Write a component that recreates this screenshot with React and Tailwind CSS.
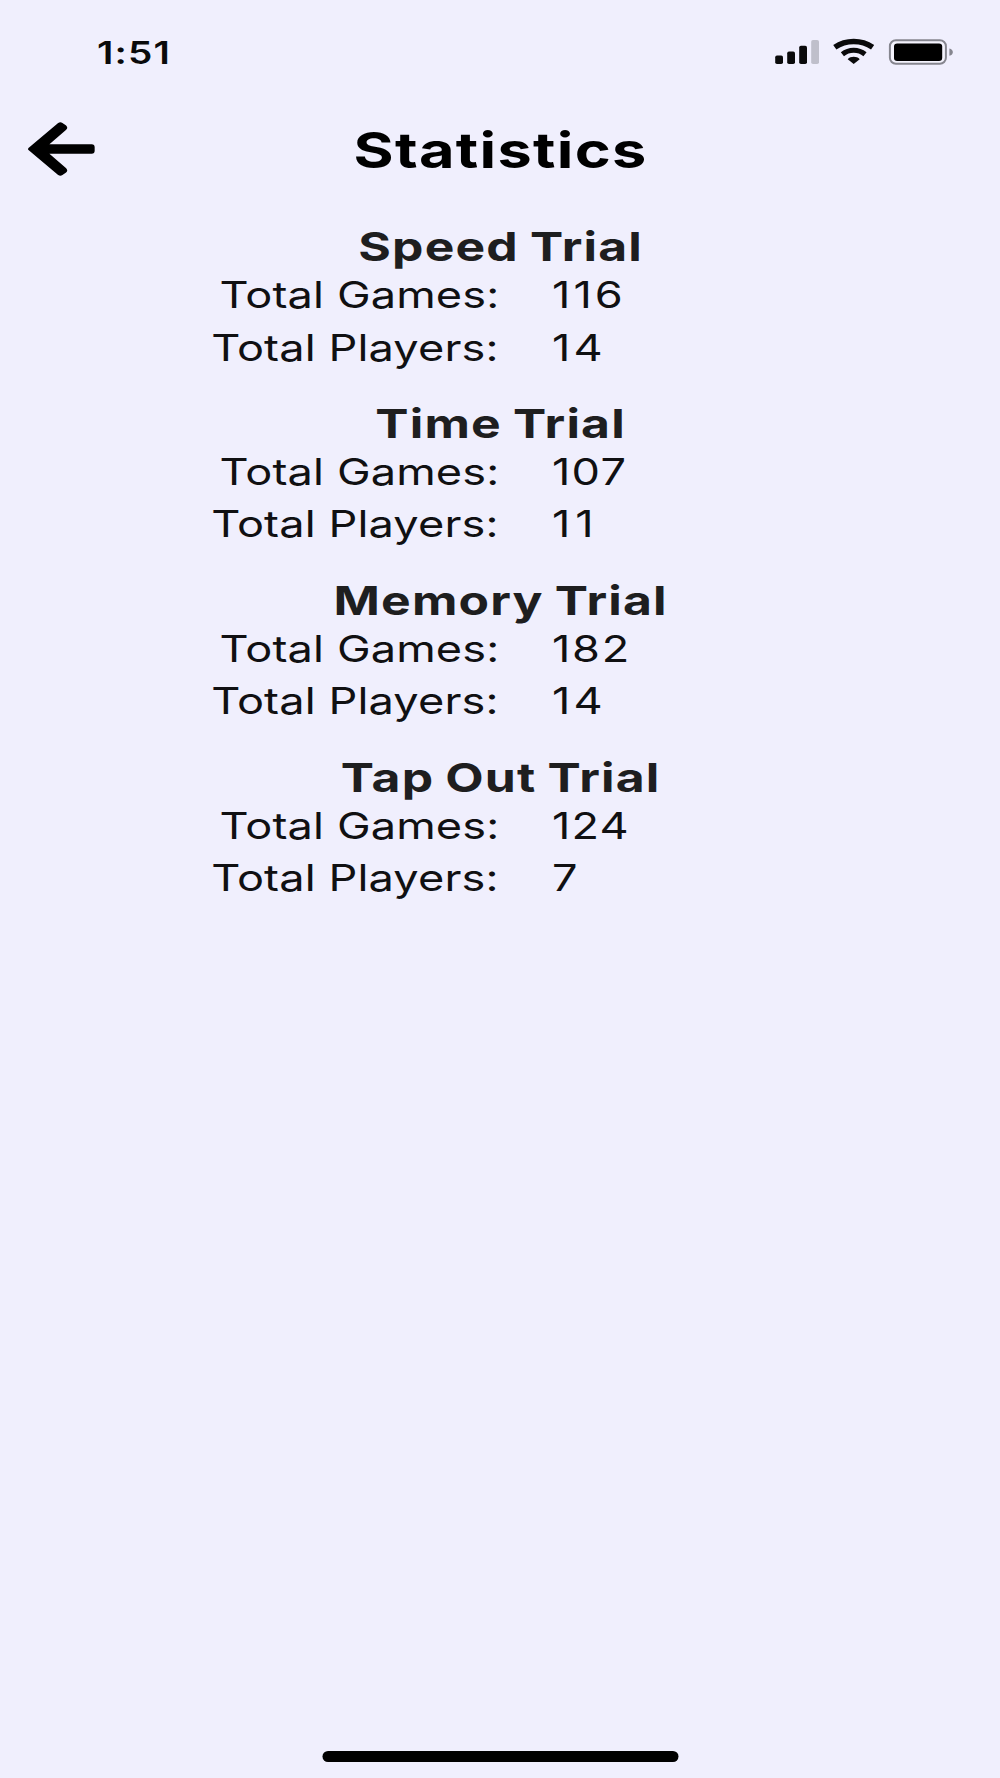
// Statistics screen: status bar, header with back arrow, and totals per game mode.

import React from "react";

const trials = [
  {
    name: "Speed Trial",
    rows: [
      { label: "Total Games:", value: 116, tracking: "tracking-[2.5px]" },
      { label: "Total Players:", value: 14, tracking: "tracking-[2.5px]" }
    ]
  },
  {
    name: "Time Trial",
    rows: [
      { label: "Total Games:", value: 107, tracking: "tracking-[1px]" },
      { label: "Total Players:", value: 11, tracking: "tracking-[4px]" }
    ]
  },
  {
    name: "Memory Trial",
    rows: [
      { label: "Total Games:", value: 182, tracking: "tracking-[1.4px]" },
      { label: "Total Players:", value: 14, tracking: "tracking-[2.5px]" }
    ]
  },
  {
    name: "Tap Out Trial",
    rows: [
      { label: "Total Games:", value: 124, tracking: "tracking-[1px]" },
      { label: "Total Players:", value: 7, tracking: "tracking-normal" }
    ]
  }
];

const StatusIcons = () => (
  <svg width="180" height="28" viewBox="775 38 180 28" className="block">
    {/* Signal */}
    <rect x="775.2" y="55.4" width="7.8" height="8.6" rx="1.8" fill="#0a0a0b" />
    <rect x="787.2" y="51.4" width="7.8" height="12.6" rx="1.8" fill="#0a0a0b" />
    <rect x="799.2" y="45.7" width="7.8" height="18.3" rx="1.8" fill="#0a0a0b" />
    <rect x="811.2" y="40" width="7.8" height="24" rx="1.8" fill="#bfbfcb" />

    {/* Wifi */}
    <g fill="none" stroke="#0a0a0b">
      <path d="M834.8 47.2C846 39.6 861.4 39.6 872.6 47.2" strokeWidth="5.6" />
      <path d="M842.4 54.2C849 48.8 858.4 48.8 865 54.2" strokeWidth="5" />
    </g>
    <path d="M853.7 64L847.7 59.2C850.6 56 856.8 56 859.7 59.2Z" fill="#0a0a0b" />

    {/* Battery */}
    <rect x="889.9" y="40.2" width="56" height="23.6" rx="6" fill="#f4f3fd" stroke="#86868f" strokeWidth="2" />
    <rect x="894" y="43.4" width="48.2" height="17.6" rx="3.2" fill="#000" />
    <path d="M949.4 48.4C954 49.6 954 54.6 949.4 55.8Z" fill="#86868f" />
  </svg>
);

const BackArrow = () => (
  <svg width="69" height="58" viewBox="80 300 207 174" className="block">
    <path
      d="M87 387L176 312Q180 309 184 312L195 320Q198 323 195 326L136 377H274Q279 377 279 382V392Q279 397 274 397H136L195 448Q198 451 195 454L184 462Q180 465 176 462Z"
      fill="#000"
      stroke="#000"
      strokeWidth="8"
      strokeLinejoin="round"
    />
  </svg>
);

const StatRow = ({ label, value, tracking }) => (
  <div className="grid h-[52.7px] grid-cols-2 items-center text-[37px] leading-none text-[#101012]">
    <div className="pr-[1px] text-right">
      <span className="inline-block origin-right scale-x-[1.22] tracking-[0.1px]">
        {label}
      </span>
    </div>
    <div className="pl-[51.5px]">
      <span className={`inline-block origin-left scale-x-[1.22] ${tracking}`}>
        {value}
      </span>
    </div>
  </div>
);

const App = () => {
  return (
    <div className="flex h-[1778px] w-[1000px] flex-col overflow-hidden bg-[#f0effd] font-['Inter',sans-serif]">
      <div className="flex h-[104px] items-center justify-between pr-[45px] pl-[97px]">
        <span className="origin-left scale-x-[1.25] text-[31px] leading-none font-semibold tracking-[0.9px] text-[#0a0a0b]">
          1:51
        </span>
        <StatusIcons />
      </div>

      <header className="grid h-[90px] grid-cols-[200px_1fr_200px] items-center">
        <button type="button" aria-label="Back" className="pl-[26.5px]">
          <BackArrow />
        </button>
        <h1 className="scale-x-[1.25] pt-[2px] pl-[1px] text-center text-[49px] leading-none font-bold tracking-[1.05px] text-black">
          Statistics
        </h1>
      </header>

      <main className="mt-[32px] flex-1">
        {trials.map((trial) => (
          <section key={trial.name} className="h-[176.9px]">
            <h2 className="scale-x-[1.245] pl-[1px] text-center text-[40px] leading-[42px] font-bold tracking-[0.95px] [word-spacing:-1.5px] text-[#1e1e1f]">
              {trial.name}
            </h2>
            {trial.rows.map((row) => (
              <StatRow key={row.label} {...row} />
            ))}
          </section>
        ))}
      </main>

      <div className="mx-auto mb-[16.5px] h-[11px] w-[356px] translate-x-[0.5px] rounded-full bg-black" />
    </div>
  );
};

export default App;
